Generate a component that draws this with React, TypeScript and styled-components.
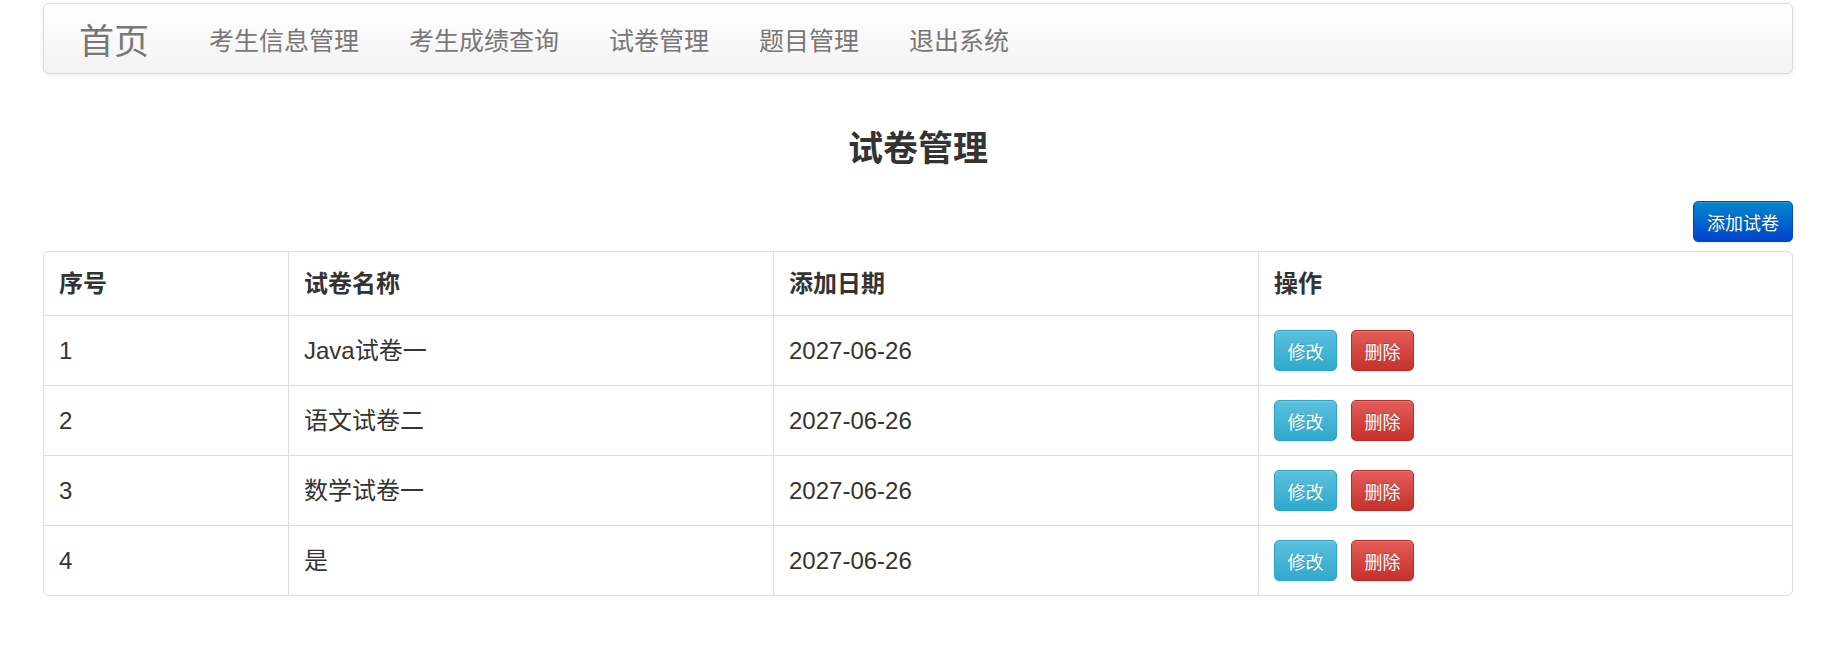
import styled, { createGlobalStyle } from "styled-components";

const GlobalStyle = createGlobalStyle`
    * {
        box-sizing: border-box;
    }
    body {
        margin: 0;
        background: #ffffff;
        font-family: "Liberation Sans", Arial, "Noto Sans CJK SC", sans-serif;
        color: #333333;
    }
`

const Page = styled.div`
    padding: 3px 48px 0 43px;
`

const Navbar = styled.nav`
    height: 71px;
    display: flex;
    align-items: center;
    border: 1px solid #d9d9d9;
    border-radius: 6px;
    background: linear-gradient(to bottom, #ffffff 0%, #f3f3f3 100%);
    box-shadow: inset 0 1px 0 rgba(255, 255, 255, 0.15), 0 1px 5px rgba(0, 0, 0, 0.075);

    .brand {
        padding: 0 35px;
        font-size: 35px;
        color: #777777;
        text-decoration: none;
    }
`

const NavItem = styled.a`
    padding: 0 25px;
    font-size: 25px;
    color: #777777;
    text-decoration: none;
    cursor: pointer;
`

const Title = styled.h3`
    margin: 55px 0 0;
    line-height: 40px;
    text-align: center;
    font-size: 35px;
    font-weight: bold;
    color: #333333;
`

const Toolbar = styled.div`
    display: flex;
    justify-content: flex-end;
    margin-top: 32px;
`

const Button = styled.button<{ $variant: "primary" | "info" | "danger" }>`
    height: 41px;
    padding: 0 13px;
    font-family: inherit;
    font-size: 18px;
    color: #ffffff;
    border-radius: 5px;
    cursor: pointer;
    text-shadow: 0 -1px 0 rgba(0, 0, 0, 0.2);
    box-shadow: inset 0 1px 0 rgba(255, 255, 255, 0.15), 0 1px 1px rgba(0, 0, 0, 0.075);
    border: 1px solid ${p =>
        p.$variant === "primary" ? "#0046c4" : p.$variant === "info" ? "#2aa3c6" : "#b92c28"};
    background: ${p =>
        p.$variant === "primary"
            ? "linear-gradient(to bottom, #0088cc 0%, #0044cc 100%)"
            : p.$variant === "info"
            ? "linear-gradient(to bottom, #5bc0de 0%, #2fa9cd 100%)"
            : "linear-gradient(to bottom, #e35d59 0%, #c6302c 100%)"};
`

const ActionButton = styled(Button)`
    width: 63px;
    padding: 0;
`

const Table = styled.table`
    width: 100%;
    margin-top: 9px;
    table-layout: fixed;
    border-collapse: separate;
    border-spacing: 0;
    border: 1px solid #dddddd;
    border-radius: 6px;
    font-size: 24px;
    color: #333333;

    th {
        padding: 0 15px;
        line-height: 63px;
        text-align: left;
        font-weight: bold;
    }
    td {
        padding: 0 15px;
        line-height: 69px;
        vertical-align: middle;
        border-top: 1px solid #dddddd;
    }
    th + th, td + td {
        border-left: 1px solid #dddddd;
    }
`

const Actions = styled.div`
    display: flex;
    align-items: center;
    gap: 14px;
`

const papers = [
    { id: 1, name: "Java试卷一", date: "2027-06-26" },
    { id: 2, name: "语文试卷二", date: "2027-06-26" },
    { id: 3, name: "数学试卷一", date: "2027-06-26" },
    { id: 4, name: "是", date: "2027-06-26" },
]

const navLinks = ["考生信息管理", "考生成绩查询", "试卷管理", "题目管理", "退出系统"]

const App = () => {

    return (
        <Page>
            <GlobalStyle />
            <Navbar>
                <a className="brand">首页</a>
                {
                    navLinks.map((n, i) => (
                        <NavItem key={i}>{n}</NavItem>
                    ))
                }
            </Navbar>

            <Title>试卷管理</Title>

            <Toolbar>
                <Button $variant="primary">添加试卷</Button>
            </Toolbar>

            <Table>
                <colgroup>
                    <col style={{ width: 244 }} />
                    <col style={{ width: 485 }} />
                    <col style={{ width: 485 }} />
                    <col />
                </colgroup>
                <thead>
                    <tr>
                        <th>序号</th>
                        <th>试卷名称</th>
                        <th>添加日期</th>
                        <th>操作</th>
                    </tr>
                </thead>
                <tbody>
                    {
                        papers.map(p => (
                            <tr key={p.id}>
                                <td>{p.id}</td>
                                <td>{p.name}</td>
                                <td>{p.date}</td>
                                <td>
                                    <Actions>
                                        <ActionButton $variant="info">修改</ActionButton>
                                        <ActionButton $variant="danger">删除</ActionButton>
                                    </Actions>
                                </td>
                            </tr>
                        ))
                    }
                </tbody>
            </Table>
        </Page>
    )
}

export default App;
